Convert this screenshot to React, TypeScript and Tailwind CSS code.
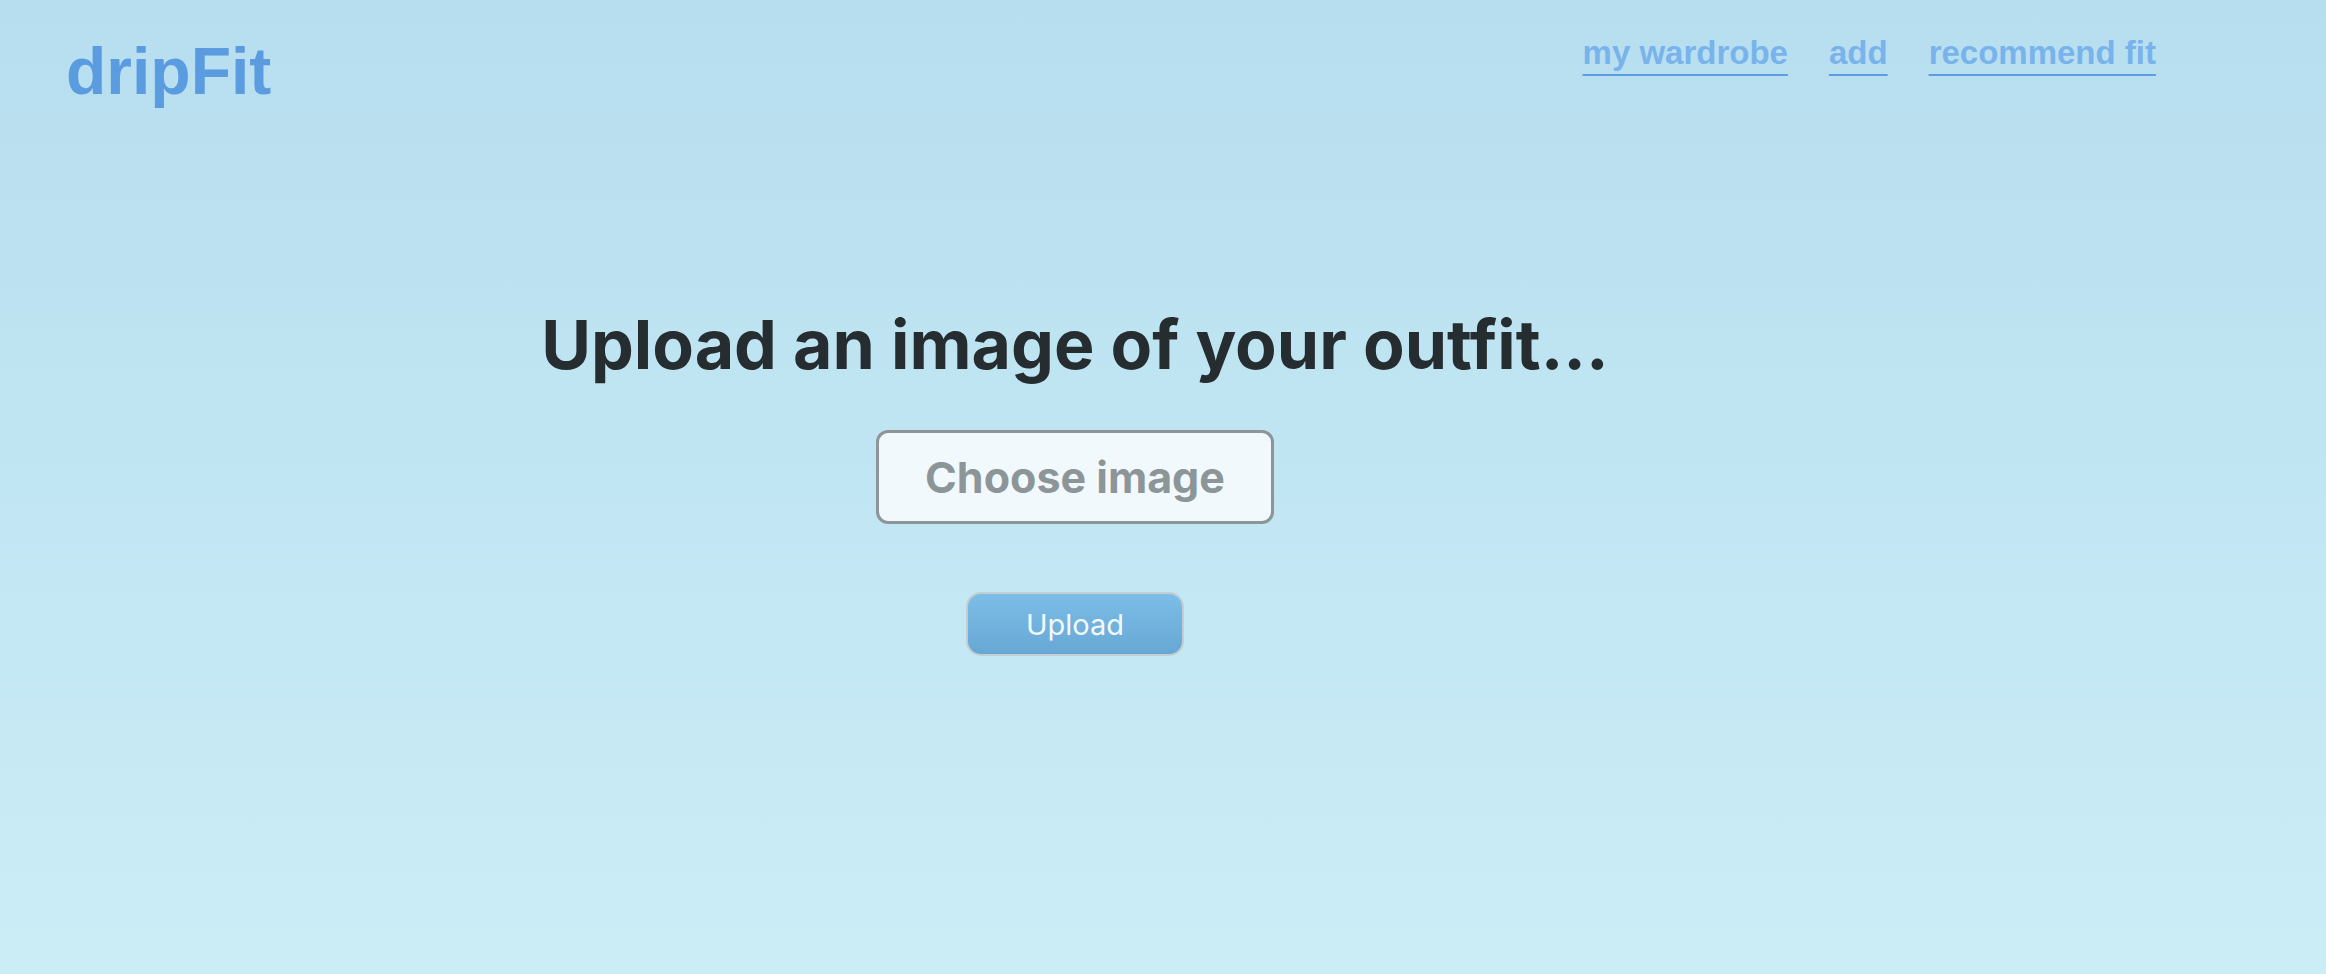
import React from "react";

const navLinks = ["my wardrobe", "add", "recommend fit"];

function Header() {
  return (
    <header className="flex items-start justify-between pl-[66px] pr-[170px] pt-[36px]">
      <a
        href="#"
        className="mt-[2px] text-[66px] font-bold leading-none text-[#5b9be0]"
        style={{ fontFamily: '"Liberation Sans", Arial, sans-serif' }}
      >
        dripFit
      </a>
      <nav
        className="flex gap-[41px] text-[33px] font-bold leading-none text-[#79b3ec]"
        style={{ fontFamily: '"Liberation Sans", Arial, sans-serif' }}
      >
        {navLinks.map((label) => (
          <a
            key={label}
            href="#"
            className="underline decoration-[#5d9de2] decoration-2 underline-offset-[10px]"
          >
            {label}
          </a>
        ))}
      </nav>
    </header>
  );
}

export default function App() {
  return (
    <div
      className="min-h-[974px] w-full bg-gradient-to-b from-[#b7deef] to-[#cbedf6]"
      style={{ fontFamily: "Inter, sans-serif" }}
    >
      <Header />
      <main className="flex w-[2150px] flex-col items-center pt-[206px]">
        <h1 className="text-[68px] font-bold leading-none text-[#262d31]">
          Upload an image of your outfit...
        </h1>
        <label className="mt-[52px] flex h-[94px] w-[398px] cursor-pointer items-center justify-center rounded-[12px] border-[3px] border-[#8c9598] bg-[#f2f9fc] text-[43px] font-bold leading-none text-[#8c9598]">
          Choose image
          <input type="file" accept="image/*" className="hidden" />
        </label>
        <button className="mt-[68px] flex h-[64px] w-[218px] items-center justify-center rounded-[15px] border-2 border-[#c5cdd2] bg-gradient-to-b from-[#7cbee7] to-[#67a7d5] text-[29px] leading-none text-[#f2f9fc]">
          Upload
        </button>
      </main>
    </div>
  );
}
